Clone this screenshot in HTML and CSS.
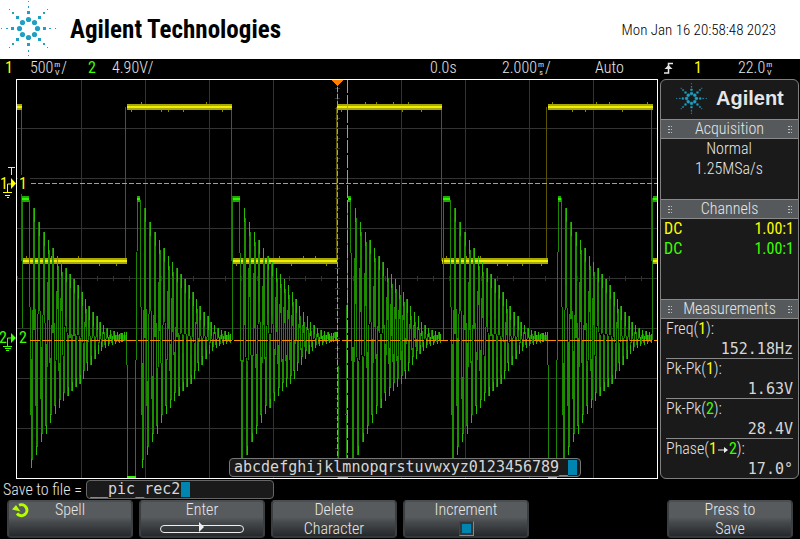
FILE: index.html
```html
<!DOCTYPE html>
<html lang="en">
<head>
<meta charset="utf-8">
<title>Agilent Technologies</title>
<link rel="stylesheet" href="styles.css">
</head>
<body>
<header class="brand">
  <svg class="brand-logo" viewBox="0 0 57 57" aria-hidden="true"><g id="spark" fill="#1f9fc2">
    <circle cx="28.5" cy="19.5" r="2.6"/><circle cx="28.5" cy="37.5" r="2.6"/><circle cx="19.5" cy="28.5" r="2.6"/><circle cx="37.5" cy="28.5" r="2.6"/>
    <circle cx="22.5" cy="22.5" r="2.6"/><circle cx="34.5" cy="22.5" r="2.6"/><circle cx="22.5" cy="34.5" r="2.6"/><circle cx="34.5" cy="34.5" r="2.6"/>
    <path d="M27 11h3v3h-3zM27 43h3v3h-3zM11 27h3v3h-3zM43 27h3v3h-3zM16 16h3v3h-3zM38 16h3v3h-3zM16 38h3v3h-3zM38 38h3v3h-3z"/>
    <path d="M28 6h1v2h-1zM28 50h1v2h-1zM6 28h2v1h-2zM49 28h2v1h-2zM12 12h2v2h-2zM43 12h2v2h-2zM12 43h2v2h-2zM43 43h2v2h-2z"/>
    <path d="M28 1h1v1h-1zM28 55h1v1h-1zM1 28h1v1h-1zM55 28h1v1h-1zM9 9h1v1h-1zM47 9h1v1h-1zM9 47h1v1h-1zM47 47h1v1h-1z"/>
  </g></svg>
  <h1 class="brand-name">Agilent Technologies</h1>
  <time class="clock" datetime="2023-01-16T20:58:48">Mon Jan 16 20:58:48 2023</time>
</header>

<div class="status">
  <span class="ch1">1</span>
  <span>500<span class="unit"><span>m</span><span>V</span></span>/</span>
  <span class="ch2">2</span>
  <span>4.90V/</span>
  <span>0.0s</span>
  <span>2.000<span class="unit"><span>m</span><span>s</span></span>/</span>
  <span>Auto</span>
  <svg class="edge" viewBox="0 0 10 12" role="img" aria-label="Rising edge"><path d="M0 11h4.5V1.500H9" fill="none" stroke="#e6e6e6" stroke-width="1.500"/><path d="M.5 7h8L4.500 3z" fill="#e6e6e6"/></svg>
  <span class="ch1">1</span>
  <span>22.0<span class="unit"><span>m</span><span>V</span></span></span>
</div>

<main class="main">
  <section class="scope">
    <svg class="plot" viewBox="0 79 658 400" preserveAspectRatio="none" shape-rendering="crispEdges">
      <g id="grid" stroke="#333" fill="none"></g>
      <g id="wave1" fill="none"></g>
      <g id="wave2" fill="none"></g>
      <g stroke="#ff8c00" fill="none">
        <path d="M31 183.500H657" stroke-dasharray="5 2"/>
        <path d="M30 340.500H657" stroke-dasharray="10 2"/>
        <path d="M337.500 80V478" stroke-dasharray="5 2"/>
        <path d="M347.500 80V478" stroke-dasharray="13 2"/>
      </g>
      <path d="M332 80h11l-5.500 6z" fill="#ff8000"/>
      <path d="M18 175h12v19H18zM18 329h12v21H18z" fill="#000"/>
      <path d="M16.500 79.500H657.500V478.500H16.500z" fill="none" stroke="#fff"/>
      <g class="marks" shape-rendering="auto">
        <g class="ch1"><text x="0" y="189">1</text><text x="19" y="189">1</text><path d="M8 167.500h7M11.500 168v7M7.500 192v-8h4M3 192.500h9M5 195.500h5M7 197.500h2" fill="none" stroke="currentColor"/><path d="M11 178l5 5.500-5 5.500z" fill="currentColor"/></g>
        <g class="ch2"><text x="-1" y="343">2</text><text x="19" y="343">2</text><path d="M7.500 346v-8h4M3 346.500h9M5 348.500h6M6 350.500h3" fill="none" stroke="currentColor"/><path d="M11 333l5 5-5 5z" fill="currentColor"/></g>
      </g>
    </svg>
    <div class="palette">abcdefghijklmnopqrstuvwxyz0123456789_<span class="cursor"></span></div>
  </section>

  <aside class="side">
    <div class="side-brand"><svg viewBox="0 0 57 57" aria-hidden="true"><use href="#spark"/></svg><strong>Agilent</strong></div>
    <h2>Acquisition</h2>
    <div class="block center"><p>Normal</p><p>1.25MSa/s</p></div>
    <h2>Channels</h2>
    <div class="block"><p class="pair ch1"><span>DC</span><span>1.00:1</span></p><p class="pair ch2"><span>DC</span><span>1.00:1</span></p></div>
    <h2>Measurements</h2>
    <dl class="measures">
      <div><dt>Freq(<span class="ch1">1</span>):</dt><dd>152.18Hz</dd></div>
      <div><dt>Pk-Pk(<span class="ch1">1</span>):</dt><dd>1.63V</dd></div>
      <div><dt>Pk-Pk(<span class="ch2">2</span>):</dt><dd>28.4V</dd></div>
      <div><dt>Phase(<span class="ch1">1</span><svg class="arrow" viewBox="0 0 12 8" role="img" aria-label="to"><path d="M1 3.500h6V1l4 3-4 3V4.500H1z" fill="#eee"/></svg><span class="ch2">2</span>):</dt><dd>17.0°</dd></div>
    </dl>
  </aside>
</main>

<div class="save">
  <label for="file">Save to file =</label>
  <div class="field"><input id="file" type="text" value="__pic_rec2"><span class="cursor"></span></div>
</div>

<nav class="keys">
  <button class="key" type="button"><svg class="turn" viewBox="0 0 18 16" aria-hidden="true"><path d="M7 3.200A5.500 5.500 0 1 1 5 11.500" fill="none" stroke="#b4ff00" stroke-width="3"/><path d="M0 7.500L4 3l4.500 6.500z" fill="#b4ff00"/></svg><span>Spell</span></button>
  <button class="key" type="button"><span>Enter</span><svg class="slide" viewBox="0 0 84 12" aria-hidden="true"><rect x=".5" y="3.500" width="83" height="7" rx="3.500" fill="none" stroke="#eee"/><path d="M39 0l5 5-5 5z" fill="#eee"/></svg></button>
  <button class="key" type="button"><span>Delete</span><span>Character</span></button>
  <label class="key"><span>Increment</span><input type="checkbox" checked></label>
  <button class="key last" type="button"><span>Press to</span><span>Save</span></button>
</nav>
<script src="plot.js"></script>
</body>
</html>
```

FILE: styles.css
```css
* { box-sizing: border-box; }
body {
  margin: 0;
  background: #000;
  color: #e6e6e6;
  font: 300 16px/20px "Roboto Condensed", "Liberation Sans Narrow", "Liberation Sans", sans-serif;
}
h1, h2, p, dl, dd { margin: 0; font-weight: 300; }
.ch1, .ch2 { font-weight: 400; }
.ch1 { color: #ff0; }
.ch2 { color: #3cff00; }

.brand { display: flex; align-items: center; height: 59px; padding-right: 24px; background: #fff; color: #000; }
.brand-logo { width: 57px; height: 57px; align-self: flex-start; }
.brand-name { margin-left: 13px; font: bold 25px/30px "Liberation Sans Narrow", "Roboto Condensed", sans-serif; }
.clock { margin-left: auto; font-size: 15px; }

.status {
  display: grid;
  grid-template-columns: 25px 58px 24px 318px 72px 93px 69px 30px 44px 1fr;
  height: 20px;
  padding-left: 5px;
  line-height: 18px;
  white-space: nowrap;
}
.unit {
  display: inline-flex;
  flex-direction: column;
  align-items: center;
  width: 8px;
  font-size: 8px;
  font-weight: 400;
  line-height: 8px;
  vertical-align: middle;
}
.edge { width: 10px; height: 12px; margin-top: 3px; }

.main { display: grid; grid-template-columns: 1fr 139px; gap: 2px; padding-right: 1px; }
.scope { position: relative; }
.plot { display: block; width: 100%; height: 400px; }
.marks { font-size: 16px; }
.marks text { fill: currentColor; }
.palette {
  position: absolute;
  left: 229px;
  bottom: 2px;
  display: flex;
  align-items: center;
  height: 19px;
  padding: 0 3px 0 4px;
  border: 1px solid #777;
  border-radius: 4px;
  background: #1a1a1a;
  color: #d6d6d6;
  font: 15px/17px "DejaVu Sans Mono", monospace;
}
.cursor { width: 9px; height: 15px; background: #0084b0; }

.side { border: 1px solid #808080; border-radius: 6px; background: #1a1a1a; overflow: hidden; }
.side-brand {
  display: flex;
  align-items: center;
  gap: 9px;
  height: 39px;
  padding: 0 0 3px 15px;
  font: bold 20px/36px "Liberation Sans", sans-serif;
}
.side-brand svg { width: 31px; height: 31px; stroke: #1f9fc2; }
.side h2 {
  display: flex;
  justify-content: space-between;
  height: 20px;
  padding: 0 6px;
  border: solid #8a8a8a;
  border-width: 1px 0;
  background: #55595c;
  font-size: 16px;
  line-height: 18px;
}
.side h2::before, .side h2::after {
  content: "";
  width: 5px;
  height: 8px;
  margin-top: 6px;
  background: conic-gradient(from 90deg at 1px 1px, transparent 270deg, #bbb 0) 0 0 / 3px 3px;
}
.block { height: 60px; padding: 0 4px 0 3px; }
.block + h2 + .block { height: 80px; }
.center { text-align: center; }
.pair { display: flex; justify-content: space-between; }
.measures { padding: 0 5px; }
.measures div { height: 40px; border-bottom: 1px solid #8a8a8a; }
.measures div:last-child { border: 0; height: 39px; }
.measures dt { line-height: 20px; }
.measures dd { text-align: right; color: #d6d6d6; font: 15px/20px "DejaVu Sans Mono", monospace; }
.arrow { width: 12px; height: 8px; }

.save { display: flex; align-items: center; gap: 4px; height: 21px; padding-left: 3px; }
.save label { width: 79px; line-height: 20px; white-space: nowrap; }
.field {
  display: flex;
  align-items: center;
  width: 188px;
  height: 19px;
  padding-left: 3px;
  border: 1px solid #666;
  border-radius: 4px;
  background: #1a1a1a;
}
.field input {
  width: 91px;
  height: 17px;
  padding: 0;
  border: 0;
  outline: 0;
  background: none;
  color: #d6d6d6;
  font: 15px/17px "DejaVu Sans Mono", monospace;
}

.keys { display: grid; grid-template-columns: repeat(6, 1fr); gap: 6px; padding: 0 7px; }
.key {
  position: relative;
  display: flex;
  flex-direction: column;
  align-items: center;
  height: 38px;
  padding: 0;
  border: 2px solid #3c3f42;
  border-top-color: #4b4e50;
  border-bottom-color: #33373a;
  border-radius: 4px;
  background: linear-gradient(#585b5d 45%, #45494b 60%, #26292b);
  color: #e6e6e6;
  font: inherit;
  line-height: 18px;
}
.last { grid-column: 6; }
.key span { height: 18px; margin-top: -1px; }
.key span + span { margin-top: 1px; }
.turn { position: absolute; left: 3px; top: 0; width: 18px; height: 16px; }
.slide { width: 84px; height: 12px; margin-top: 3px; }
.key input {
  appearance: none;
  width: 15px;
  height: 15px;
  margin: 2px 0 0;
  border: 1px solid #888;
  border-top-color: #444;
  border-left-color: #444;
  background: #33373a;
}
.key input:checked { background: linear-gradient(#0084b0, #0084b0) center / 9px 9px no-repeat #33373a; }
```

FILE: plot.js
```js
const NS = "http://www.w3.org/2000/svg";
function add(group, d, stroke, width) {
  const p = document.createElementNS(NS, "path");
  p.setAttribute("d", d);
  if (stroke) p.setAttribute("stroke", stroke);
  if (width) p.setAttribute("stroke-width", width);
  document.getElementById(group).appendChild(p);
}

// Graticule: 10 x 8 divisions with minor ticks on the centre axes
let g = "";
for (let x = 81.5; x < 650; x += 64) g += `M${x} 80V478`;
for (let y = 128.5; y < 470; y += 50) g += `M17 ${y}H657`;
for (let x = 17.5; x < 657; x += 16) g += `M${x} 276V281`;
for (let y = 88.5; y < 478; y += 10) g += `M335 ${y}H340`;
add("grid", g);

// Channel 1: square wave
const edges = [17, 22, 126.5, 232, 337, 442, 547.5, 652.5, 657];
let seed = 7;
const rand = () => (seed = (seed * 16807) % 2147483647) / 2147483647;
let sides = "", band = "", noise = "";
for (let i = 0; i < edges.length - 1; i++) {
  const y = i % 2 ? 261 : 107, a = edges[i], b = edges[i + 1];
  band += `M${a} ${y}H${b}`;
  if (i) sides += `M${Math.floor(a) - 0.5} 107V261`;
  for (let x = a + 4; x < b - 4; x += 5 + rand() * 22) {
    noise += `M${Math.round(x)}.5 ${y + (rand() < 0.6 ? -5 : 3)}v2`;
  }
}
add("wave1", sides, "#5c5600", 1);
add("wave1", band, "#a9a800", 6);
add("wave1", band, "#f0ee00", 2);
add("wave1", noise, "#8d8a00", 1);

// Channel 2: ringing bursts; x offsets start at the first peak after each plateau
const px = [0, 5, 10, 15, 19.5, 24, 28.5, 32.5, 37, 41, 45, 49, 53, 56.5, 60, 64, 68, 71, 74.5, 78, 81.5, 85, 88.5, 92, 95.5];
const py = [198, 208, 222, 232, 240, 248, 256, 262, 268, 274, 279, 285, 292, 299, 306, 312, 316, 322, 325, 328, 330, 331, 332, 333, 332];
const ty = [468, 455, 442, 434, 423, 414, 408, 401, 396, 391, 387, 384, 379, 371, 365, 359, 354, 351, 348, 346, 345, 344, 343, 342, 341];
let lines = "", thick = "", tips = "", plateau = "", floor = "";
function burst(x0, end) {
  lines += `M${x0} 198`;
  for (let i = 0; i < px.length && x0 + px[i] < end; i++) {
    const x = x0 + px[i];
    const half = (px[i + 1] !== undefined ? px[i + 1] - px[i] : 3) / 2;
    const t = x + half;
    const tip = i > 17 ? 9 : 14;
    lines += `L${x} ${py[i]}L${t} ${ty[i]}`;
    if (i) tips += `M${Math.floor(x) + 0.5} ${py[i]}v${tip}`;
    tips += `M${Math.floor(t) + 0.5} ${ty[i]}v${-Math.min(tip, 9)}`;
    if (i > 15) continue;
    // The doubled columns stop at uneven heights on either side of the zero line
    const up = 338 - (338 - py[i]) * rand() * 0.4;
    const down = 338 + (ty[i] - 338) * rand() * 0.4;
    if (i) thick += `M${Math.round(x)} ${py[i] + 10}V${Math.round(up)}`;
    thick += `M${Math.round(t)} ${ty[i] - 8}V${Math.round(down)}`;
  }
}
for (let k = 0; k < 3; k++) {
  const o = k * 210.5;
  plateau += `M${22 + o} 199H${29 + o}M${137 + o} 199H${140 + o}`;
  lines += `M${22 + o} 196V${k ? 340 : 328}`;
  burst(29 + o, 127 + o);
  lines += `M${126.5 + o} 340V364L${127.5 + o} 366V478M${135.5 + o} 478V415L${137.5 + o} 200`;
  floor += `M${127 + o} 477H${136 + o}`;
  burst(140 + o, 231 + o);
}
plateau += "M653 199H657";
lines += "M652.500 198V340";
add("wave2", lines, "#1b8600", 1);
add("wave2", thick, "#1d8e00", 2);
add("wave2", tips, "#28bd00", 1);
add("wave2", plateau, "#1fa800", 6);
add("wave2", plateau + floor, "#30f500", 2);
```
